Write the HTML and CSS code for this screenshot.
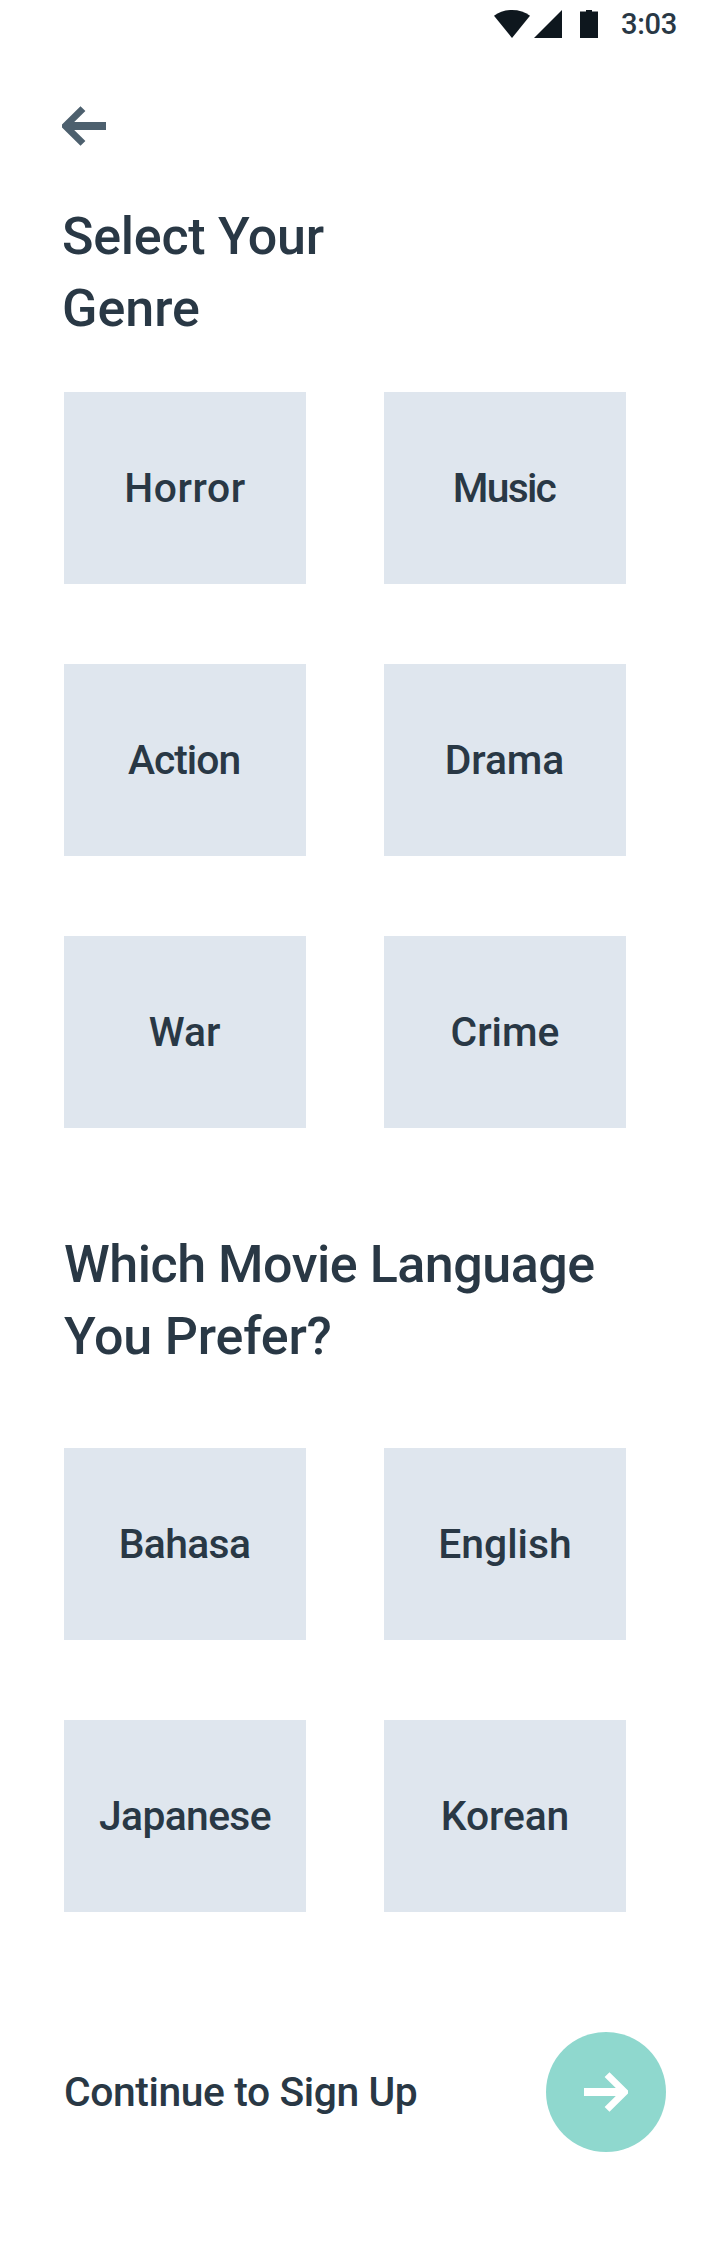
FILE: index.html
```
<!DOCTYPE html>
<html lang="en">
<head>
<meta charset="utf-8">
<title>Select Your Genre</title>
<link rel="stylesheet" href="styles.css">
</head>
<body>
<header class="status">
  <svg class="wifi" width="36" height="28" viewBox="0 0 36 28"><path d="M18 28 0 5.8C5 2 11 0 18 0s13 2 18 5.8z"/></svg>
  <svg class="signal" width="28" height="28" viewBox="0 0 28 28"><path d="M28 0v28H0z"/></svg>
  <svg class="battery" width="18" height="28" viewBox="0 0 18 28"><path d="M6 0h6v1.5h6V28H0V1.5h6z"/></svg>
  <span class="time">3:03</span>
</header>
<main class="page">
  <button class="back" aria-label="Back">
    <svg width="44" height="40" viewBox="0 0 44 40"><path d="M18.5.2 23.4 5 12.2 16H44v8H12.2l11.2 11-4.9 4.8L0 21.5v-3z"/></svg>
  </button>
  <h1 class="title title-genre"><span class="w-select">Select Your</span><br><span class="w-genre">Genre</span></h1>
  <section class="grid">
    <button class="tile w-horror">Horror</button>
    <button class="tile w-music">Music</button>
    <button class="tile w-action">Action</button>
    <button class="tile w-drama">Drama</button>
    <button class="tile w-war">War</button>
    <button class="tile w-crime">Crime</button>
  </section>
  <h2 class="title title-language"><span class="w-which">Which Movie Language</span><br><span class="w-prefer">You Prefer?</span></h2>
  <section class="grid">
    <button class="tile w-bahasa">Bahasa</button>
    <button class="tile w-english">English</button>
    <button class="tile w-japanese">Japanese</button>
    <button class="tile w-korean">Korean</button>
  </section>
  <footer class="next">
    <span class="next-label">Continue to Sign Up</span>
    <button class="next-button" aria-label="Continue">
      <svg width="44" height="40" viewBox="0 0 44 40"><path d="M25.5.2 20.6 5l11.2 11H0v8h31.8L20.6 35l4.9 4.8L44 21.5v-3z"/></svg>
    </button>
  </footer>
</main>
</body>
</html>
```
FILE: styles.css
```
* { box-sizing: border-box; }
body {
  margin: 0;
  background: #fff;
  color: #293845;
  font-family: Roboto, "Liberation Sans", sans-serif;
  font-weight: 500;
}
button {
  border: 0;
  padding: 0;
  background: none;
  color: inherit;
  font: inherit;
}
svg { display: block; }

.status {
  display: flex;
  align-items: center;
  justify-content: flex-end;
  height: 48px;
  padding-right: 43px;
  fill: #0e171e;
}
.signal { margin-left: 4px; }
.battery { margin: 0 23px 0 18px; }
.time {
  font-size: 29px;
  line-height: 48px;
  letter-spacing: -0.3px;
}

.page { padding: 58px 54px 112px 64px; }
.back {
  display: block;
  margin-left: -2px;
  fill: #4d606e;
}
.title {
  margin: 0;
  font-size: 52px;
  font-weight: 500;
  line-height: 72px;
}
.title-genre { margin: 55px 0 47px -2px; }
.title-language { margin: 101px 0 75px; white-space: nowrap; }

.grid {
  display: grid;
  grid-template-columns: 242px 242px;
  grid-auto-rows: 192px;
  gap: 80px 78px;
}
.tile {
  background: #dfe6ee;
  font-size: 40.8px;
  line-height: 192px;
}

.next {
  display: flex;
  align-items: center;
  justify-content: space-between;
  margin-top: 120px;
}
.next-label {
  font-size: 40.8px;
  letter-spacing: -0.4px;
}
.next-button {
  display: flex;
  align-items: center;
  justify-content: center;
  width: 120px;
  height: 120px;
  border-radius: 50%;
  background: #8fd8ce;
  fill: #fff;
}

.w-select { letter-spacing: -0.26px; }
.w-genre { letter-spacing: 0; }
.w-which { letter-spacing: -0.47px; }
.w-prefer { letter-spacing: -0.18px; }
.w-horror { letter-spacing: 0.6px; }
.w-music { padding-right: 2px; letter-spacing: -1.75px; }
.w-action { padding-right: 2px; letter-spacing: -1px; }
.w-drama { padding-right: 1px; letter-spacing: -0.1px; }
.w-war { padding-right: 1px; letter-spacing: 0; }
.w-crime { letter-spacing: 0; }
.w-bahasa { padding-right: 1px; letter-spacing: -0.65px; }
.w-english { letter-spacing: 0; }
.w-japanese { letter-spacing: -0.65px; }
.w-korean { letter-spacing: -0.1px; }
```
